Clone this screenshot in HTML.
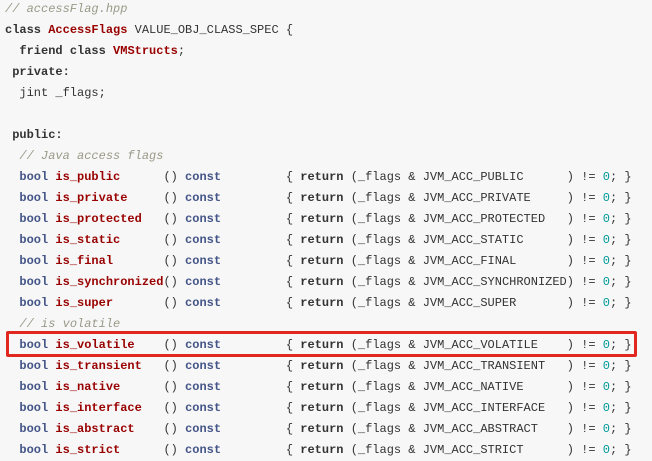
<!DOCTYPE html>
<html><head><meta charset="utf-8"><style>
html,body{margin:0;padding:0;background:#f7f7f7;width:652px;height:461px;overflow:hidden}
pre{position:absolute;left:5px;top:-1.5px;margin:0;font-family:"Liberation Mono",monospace;font-size:12px;line-height:21px;color:#333}
.k{font-weight:bold;color:#333}
.t{font-weight:bold;color:#445588}
.f{font-weight:bold;color:#990000}
.c{font-style:italic;color:#999988}
.n{color:#009999}
.box{position:absolute;left:6px;top:331px;width:625px;height:20px;border:3px solid #e0281e;border-radius:2px}
</style></head><body>
<pre><span class="c">// accessFlag.hpp</span>
<span class="k">class</span> <span class="f">AccessFlags</span> VALUE_OBJ_CLASS_SPEC {
  <span class="k">friend</span> <span class="k">class</span> <span class="f">VMStructs</span>;
 <span class="k">private:</span>
  jint _flags;

 <span class="k">public:</span>
  <span class="c">// Java access flags</span>
  <span class="t">bool</span> <span class="f">is_public</span>      () <span class="t">const</span>         { <span class="k">return</span> (_flags &amp; JVM_ACC_PUBLIC      ) != <span class="n">0</span>; }
  <span class="t">bool</span> <span class="f">is_private</span>     () <span class="t">const</span>         { <span class="k">return</span> (_flags &amp; JVM_ACC_PRIVATE     ) != <span class="n">0</span>; }
  <span class="t">bool</span> <span class="f">is_protected</span>   () <span class="t">const</span>         { <span class="k">return</span> (_flags &amp; JVM_ACC_PROTECTED   ) != <span class="n">0</span>; }
  <span class="t">bool</span> <span class="f">is_static</span>      () <span class="t">const</span>         { <span class="k">return</span> (_flags &amp; JVM_ACC_STATIC      ) != <span class="n">0</span>; }
  <span class="t">bool</span> <span class="f">is_final</span>       () <span class="t">const</span>         { <span class="k">return</span> (_flags &amp; JVM_ACC_FINAL       ) != <span class="n">0</span>; }
  <span class="t">bool</span> <span class="f">is_synchronized</span>() <span class="t">const</span>         { <span class="k">return</span> (_flags &amp; JVM_ACC_SYNCHRONIZED) != <span class="n">0</span>; }
  <span class="t">bool</span> <span class="f">is_super</span>       () <span class="t">const</span>         { <span class="k">return</span> (_flags &amp; JVM_ACC_SUPER       ) != <span class="n">0</span>; }
  <span class="c">// is volatile</span>
  <span class="t">bool</span> <span class="f">is_volatile</span>    () <span class="t">const</span>         { <span class="k">return</span> (_flags &amp; JVM_ACC_VOLATILE    ) != <span class="n">0</span>; }
  <span class="t">bool</span> <span class="f">is_transient</span>   () <span class="t">const</span>         { <span class="k">return</span> (_flags &amp; JVM_ACC_TRANSIENT   ) != <span class="n">0</span>; }
  <span class="t">bool</span> <span class="f">is_native</span>      () <span class="t">const</span>         { <span class="k">return</span> (_flags &amp; JVM_ACC_NATIVE      ) != <span class="n">0</span>; }
  <span class="t">bool</span> <span class="f">is_interface</span>   () <span class="t">const</span>         { <span class="k">return</span> (_flags &amp; JVM_ACC_INTERFACE   ) != <span class="n">0</span>; }
  <span class="t">bool</span> <span class="f">is_abstract</span>    () <span class="t">const</span>         { <span class="k">return</span> (_flags &amp; JVM_ACC_ABSTRACT    ) != <span class="n">0</span>; }
  <span class="t">bool</span> <span class="f">is_strict</span>      () <span class="t">const</span>         { <span class="k">return</span> (_flags &amp; JVM_ACC_STRICT      ) != <span class="n">0</span>; }
</pre>
<div class="box"></div>
</body></html>
